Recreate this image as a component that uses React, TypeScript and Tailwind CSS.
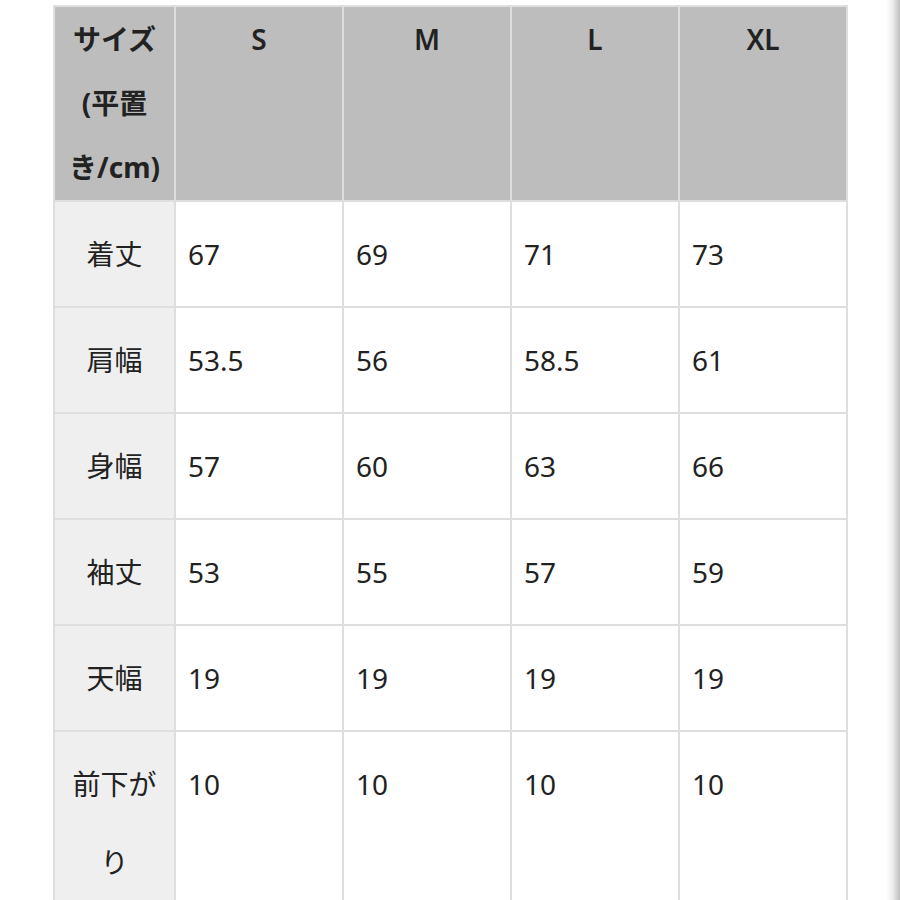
const sizes = ["S", "M", "L", "XL"];

const rows: Array<{ label: string; values: string[] }> = [
  { label: "着丈", values: ["67", "69", "71", "73"] },
  { label: "肩幅", values: ["53.5", "56", "58.5", "61"] },
  { label: "身幅", values: ["57", "60", "63", "66"] },
  { label: "袖丈", values: ["53", "55", "57", "59"] },
  { label: "天幅", values: ["19", "19", "19", "19"] },
  { label: "前下がり", values: ["10", "10", "10", "10"] },
];

export default function App() {
  return (
    <div
      className="flex h-[900px] w-[900px] overflow-hidden bg-white text-[#222]"
      style={{ fontFamily: "'Noto Sans', 'Noto Sans CJK JP', sans-serif" }}
    >
      <div className="flex-1 pl-[53px] pt-[5px]">
        <table className="w-[793px] table-fixed border-collapse text-[28px]">
          <colgroup>
            <col className="w-[121px]" />
            <col className="w-[168px]" />
            <col className="w-[168px]" />
            <col className="w-[168px]" />
            <col className="w-[168px]" />
          </colgroup>
          <thead>
            <tr>
              <th className="h-[195px] border-2 border-[#dedede] bg-[#bdbdbd] px-[6px] align-top text-center font-bold leading-[64px]">
                サイズ(平置き/cm)
              </th>
              {sizes.map((s) => (
                <th
                  key={s}
                  className="border-2 border-[#dedede] bg-[#bdbdbd] align-top text-center font-semibold leading-[64px]"
                >
                  {s}
                </th>
              ))}
            </tr>
          </thead>
          <tbody>
            {rows.map((row) => (
              <tr key={row.label}>
                <td className="border-2 border-[#dedede] bg-[#efefef] px-[6px] py-[13px] align-top text-center leading-[78px]">
                  {row.label}
                </td>
                {row.values.map((v, i) => (
                  <td
                    key={i}
                    className="border-2 border-[#dedede] py-[13px] pl-[12px] align-top text-left leading-[78px]"
                  >
                    {v}
                  </td>
                ))}
              </tr>
            ))}
          </tbody>
        </table>
      </div>
      <div className="w-[14px] bg-gradient-to-r from-white via-[#ececec] to-[#bcbcbc]" />
    </div>
  );
}
